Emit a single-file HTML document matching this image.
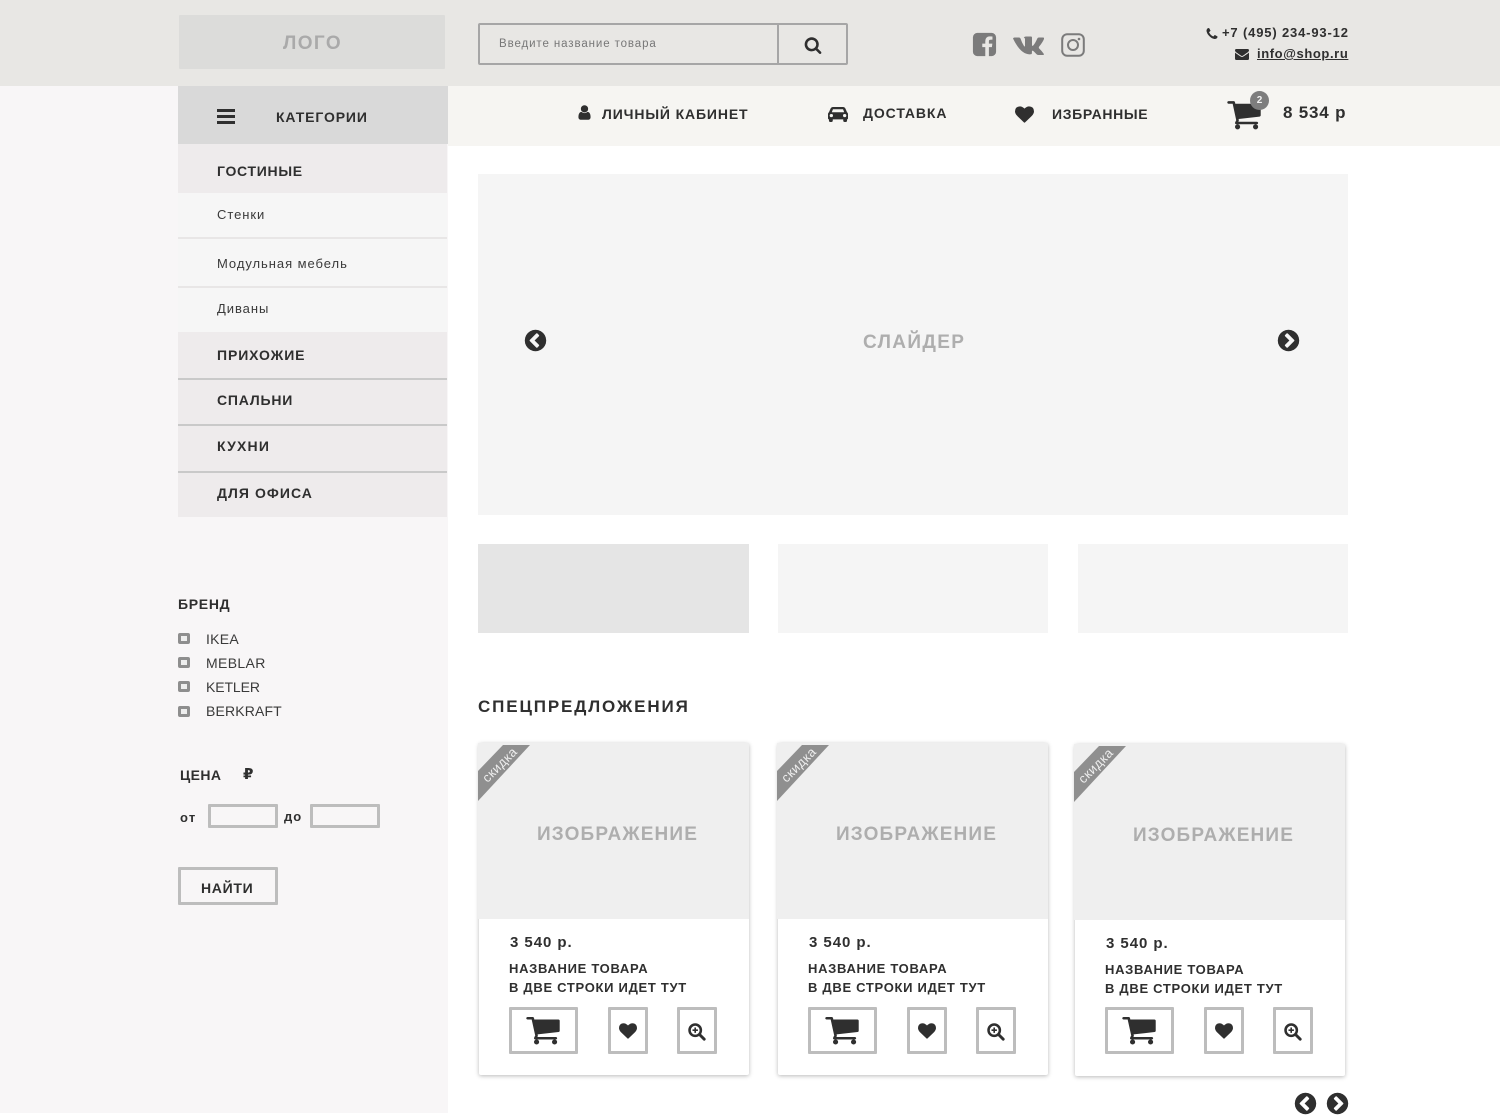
<!DOCTYPE html>
<html lang="ru"><head><meta charset="utf-8"><title>Магазин</title>
<style>
html,body{margin:0;padding:0}
body{position:relative;width:1500px;height:1113px;overflow:hidden;background:#fff;font-family:"Liberation Sans",sans-serif;color:#2f2f2f}
.b,.t,svg{position:absolute}
.t{white-space:nowrap;line-height:20px}
.h{font-weight:700;font-size:14px;letter-spacing:.87px}
.s{font-size:13px;letter-spacing:.95px;color:#3a3a3a}
.g{font-weight:700;color:#aeaeae}
.f{font-size:14px;color:#3a3a3a}
.c{fill:#2f2f2f}
.cb{width:6px;height:5px;left:178px;border:3px solid #8e8e8e;background:#eee;border-radius:2px}
.btn{border:3px solid #bdbdbd;box-sizing:border-box;border-radius:1px;background:#fff}
.card{width:271px;height:332px}
.body{position:absolute;left:1px;top:0;width:270px;height:332px;background:#fff;box-shadow:0 1px 4px rgba(0,0,0,.28);border-radius:2px}
.img{position:absolute;left:0;top:0;width:271px;height:176px;background:#efefef}
.rib{position:absolute;left:0;top:0;width:60px;height:60px;background:#8f8f8f;clip-path:polygon(0 28px,25px 2px,52px 2px,0 58px)}
.rt{position:absolute;left:-4px;top:12px;width:52px;height:20px;transform:rotate(-45deg);color:#eee;font-size:13px;line-height:20px;text-align:center;letter-spacing:.5px;white-space:nowrap}
.nm{font-size:13px;font-weight:700;letter-spacing:.7px}
</style></head><body>
<svg width="0" height="0" style="position:absolute"><defs>
<path id="cart" d="M704 1536q0 52-38 90t-90 38-90-38-38-90 38-90 90-38 90 38 38 90zm896 0q0 52-38 90t-90 38-90-38-38-90 38-90 90-38 90 38 38 90zm128-1088v512q0 24-16.500 42.500t-40.500 21.500l-1044 122q13 60 13 70 0 16-24 64h920q26 0 45 19t19 45-19 45-45 19h-1024q-26 0-45-19t-19-45q0-11 8-31.500t16-36 21.500-40 15.500-29.500l-177-823h-204q-26 0-45-19t-19-45 19-45 45-19h256q16 0 28.500 6.500t19.500 15.500 13 24.500 8 26 5.500 29.500 4.500 26h1201q26 0 45 19t19 45z"/>
<path id="heart" d="M896 1664q-26 0-44-18l-624-602q-10-8-27.500-26t-55.500-65.500-68-97.500-53.500-121-23.500-138q0-220 127-344t351-124q62 0 126.500 21.500t120 58 95.500 68.500 76 68q36-36 76-68t95.500-68.500 120-58 126.500-21.500q224 0 351 124t127 344q0 221-229 450l-623 600q-18 18-44 18z"/>
<path id="left" d="M1037 1395l102-102q19-19 19-45t-19-45l-307-307 307-307q19-19 19-45t-19-45l-102-102q-19-19-45-19t-45 19l-454 454q-19 19-19 45t19 45l454 454q19 19 45 19t45-19zm627-499q0 209-103 385.500t-279.500 279.500-385.500 103-385.500-103-279.500-279.500-103-385.500 103-385.500 279.500-279.500 385.500-103 385.500 103 279.500 279.500 103 385.500z"/>
<path id="right" d="M845 1395l454-454q19-19 19-45t-19-45l-454-454q-19-19-45-19t-45 19l-102 102q-19 19-19 45t19 45l307 307-307 307q-19 19-19 45t19 45l102 102q19 19 45 19t45-19zm819-499q0 209-103 385.500t-279.500 279.500-385.500 103-385.500-103-279.500-279.500-103-385.500 103-385.500 279.500-279.500 385.500-103 385.500 103 279.500 279.500 103 385.500z"/>
<g id="zoom"><circle cx="8" cy="8" r="6.300" fill="none" stroke="#2f2f2f" stroke-width="2.800"/><path d="M12.800 12.800L18 18" stroke="#2f2f2f" stroke-width="3.200" stroke-linecap="round"/><path d="M8 5v6M5 8h6" stroke="#2f2f2f" stroke-width="1.800"/></g>
</defs></svg>

<div class="b" style="left:0;top:0;width:1500px;height:86px;background:#e8e7e4"></div>
<div class="b" style="left:448px;top:86px;width:1052px;height:60px;background:#f6f5f2"></div>
<div class="b" style="left:0;top:86px;width:448px;height:1027px;background:#f8f6f7"></div>

<div class="b" style="left:179px;top:15px;width:266px;height:54px;background:#dcdcda;border-radius:1px"></div>
<div class="t g" style="left:283px;top:34px;font-size:19px;letter-spacing:1.400px;font-weight:700;color:#aaa">ЛОГО</div>
<div class="b" style="left:478px;top:23px;width:370px;height:42px;box-sizing:border-box;border:2px solid #a6a6a6;border-radius:2px"></div>
<div class="b" style="left:777px;top:24px;width:2px;height:40px;background:#a6a6a6"></div>
<div class="t" style="left:499px;top:34px;font-size:11.500px;letter-spacing:.9px;color:#777">Введите название товара</div>
<svg style="left:804px;top:36px" width="18" height="18" viewBox="0 0 1792 1792"><path class="c" d="M1216 832q0-185-131.500-316.500t-316.500-131.500-316.500 131.500-131.500 316.500 131.500 316.500 316.500 131.500 316.500-131.500 131.500-316.500zm512 832q0 52-38 90t-90 38q-54 0-90-38l-343-342q-179 124-399 124-143 0-273.500-55.500t-225-150-150-225-55.500-273.500 55.500-273.500 150-225 225-150 273.500-55.500 273.500 55.500 225 150 150 225 55.500 273.500q0 220-124 399l343 343q37 37 37 90z"/></svg>

<svg style="left:971px;top:31px" width="27" height="27" viewBox="0 0 1792 1792"><path fill="#7b7b7b" d="M1376 128q119 0 203.500 84.500t84.500 203.500v960q0 119-84.500 203.500t-203.500 84.500h-188v-595h199l30-232h-229v-148q0-56 23.500-84t91.500-28l122-1v-207q-63-9-178-9-136 0-217.500 80t-81.500 226v171h-200v232h200v595h-532q-119 0-203.500-84.500t-84.500-203.500v-960q0-119 84.500-203.500t203.500-84.500h960z"/></svg>
<svg style="left:1013px;top:35px" width="31" height="20" viewBox="0 0 31 20"><path fill="#7b7b7b" d="M0 3.500Q.5 2.500 1.500 2.500H6q1 0 1.500 1Q9 8 11 11q.8 1 1 0V4Q12 3 10.800 2.500 11.500 1.500 13 1.500h5q1.200 0 1 1.500v7q0 1.300 1 .7 2-2 4.300-7.200.5-1 1.500-1h4.200q1.500 0 1 1.500-1.500 3.500-4.800 7.500-.8 1 0 2 2.800 2.700 4.500 5.200.7 1.300-.8 1.300h-4.600q-1.200 0-2-1-1.400-1.600-3-3-1.300-1-1.400.6V18q0 1.300-1.500 1.300Q8 20 0 3.500z"/></svg>
<svg style="left:1061px;top:33px" width="24" height="24" viewBox="0 0 24 24" fill="none" stroke="#7b7b7b"><rect x="1.200" y="1.200" width="21.600" height="21.600" rx="5" stroke-width="2"/><circle cx="12" cy="12" r="5" stroke-width="2"/><circle cx="18" cy="6" r="1.300" fill="#7b7b7b" stroke="none"/></svg>

<svg style="left:1205px;top:27px" width="14" height="14" viewBox="0 0 1792 1792"><path class="c" d="M1600 1240q0 27-10 70.500t-21 68.500q-21 50-122 106-94 51-186 51-27 0-53-3.500t-57.500-12.500-47-14.500-55.500-20.500-49-18q-98-35-175-83-127-79-264-216t-216-264q-48-77-83-175-3-9-18-49t-20.500-55.500-14.500-47-12.500-57.500-3.500-53q0-92 51-186 56-101 106-122 25-11 68.500-21t70.500-10q14 0 21 3 18 6 53 76 11 19 30 54t35 63.500 31 53.500q3 4 17.500 25t21.500 35.500 7 28.500q0 20-28.500 50t-62 55-62 53-28.500 46q0 9 5 22.500t8.500 20.500 14 24 11.500 19q76 137 174 235t235 174q2 1 19 11.500t24 14 20.500 8.500 22.500 5q18 0 46-28.500t53-62 55-62 50-28.500q14 0 28.500 7t35.500 21.500 25 17.500q25 15 53.500 31t63.500 35 54 30q70 35 76 53 3 7 3 21z"/></svg>
<div class="t" style="left:1222px;top:23px;font-size:13px;font-weight:700;letter-spacing:.84px">+7 (495) 234-93-12</div>
<svg style="left:1235px;top:47px" width="14" height="14" viewBox="0 0 1792 1792"><path class="c" d="M1792 710v794q0 66-47 113t-113 47h-1472q-66 0-113-47t-47-113v-794q44 49 101 87 362 246 497 345 57 42 92.500 65.500t94.500 48 110 24.500h2q51 0 110-24.500t94.500-48 92.500-65.500q170-123 498-345 57-39 100-87zm0-294q0 79-49 151t-122 123q-376 261-468 325-10 7-42.500 30.500t-54 38-52 32.500-57.500 27-50 9h-2q-23 0-50-9t-57.500-27-52-32.500-54-38-42.500-30.500q-91-64-262-182.500t-205-142.500q-62-42-117-115.500t-55-136.500q0-78 41.500-130t118.500-52h1472q65 0 112.500 47t47.500 113z"/></svg>
<div class="t" style="left:1257px;top:44px;font-size:13px;font-weight:700;letter-spacing:.6px;text-decoration:underline">info@shop.ru</div>

<div class="b" style="left:178px;top:86px;width:270px;height:58px;background:#d9d9d9"></div>
<div class="b" style="left:217px;top:109px;width:18px;height:3px;background:#2f2f2f"></div>
<div class="b" style="left:217px;top:115px;width:18px;height:3px;background:#2f2f2f"></div>
<div class="b" style="left:217px;top:121px;width:18px;height:3px;background:#2f2f2f"></div>
<div class="t h" style="left:276px;top:107px">КАТЕГОРИИ</div>

<svg style="left:576px;top:104px" width="17" height="17" viewBox="0 0 1792 1792"><path class="c" d="M1536 1399q0 109-62.500 187t-150.500 78h-854q-88 0-150.500-78t-62.500-187q0-85 8.500-160.500t31.500-152 58.500-131 94-89 134.500-34.500q131 128 313 128t313-128q76 0 134.500 34.500t94 89 58.500 131 31.500 152 8.500 160.500zm-256-887q0 159-112.500 271.500t-271.500 112.500-271.500-112.500-112.500-271.500 112.500-271.500 271.500-112.500 271.500 112.500 112.500 271.500z"/></svg>
<div class="t h" style="left:602px;top:104px">ЛИЧНЫЙ КАБИНЕТ</div>
<svg style="left:828px;top:107px" width="20" height="15" viewBox="0 0 21 17" preserveAspectRatio="none"><path class="c" d="M5 0h11q1.500 0 2.200 1.500L20 6q1 .8 1 2v5q0 1-1 1v1.500q0 1.500-1.500 1.500h-1q-1.500 0-1.500-1.500V14H5v1.500Q5 17 3.500 17h-1Q1 17 1 15.500V14q-1 0-1-1V8q0-1.200 1-2l1.800-4.500Q3.500 0 5 0zm.2 2.500L4 6h13l-1.200-3.500zM3.500 8a1.600 1.600 0 100 3.500 1.600 1.600 0 000-3.500zm14 0a1.600 1.600 0 100 3.500 1.600 1.600 0 000-3.500z"/></svg>
<div class="t h" style="left:863px;top:103px;letter-spacing:.9px">ДОСТАВКА</div>
<svg style="left:1015px;top:105px" width="19" height="19" viewBox="0 0 1792 1792"><use href="#heart" class="c"/></svg>
<div class="t h" style="left:1052px;top:104px;letter-spacing:.65px">ИЗБРАННЫЕ</div>
<svg style="left:1226px;top:96px" width="36" height="36" viewBox="0 0 1792 1792"><use href="#cart" class="c"/></svg>
<div class="b" style="left:1250px;top:91px;width:19px;height:19px;border-radius:50%;background:#7d7d7d;color:#f2f2f2;font-size:10px;font-weight:700;line-height:19px;text-align:center">2</div>
<div class="t" style="left:1283px;top:103px;font-size:17px;font-weight:700;letter-spacing:.8px">8 534 р</div>

<div class="b" style="left:178px;top:144px;width:269px;height:49px;background:#eeebec"></div>
<div class="t h" style="left:217px;top:161px;letter-spacing:.7px">ГОСТИНЫЕ</div>
<div class="b" style="left:178px;top:193px;width:269px;height:139px;background:#f6f6f6"></div>
<div class="b" style="left:178px;top:237px;width:269px;height:2px;background:#e8e6e6"></div>
<div class="b" style="left:178px;top:286px;width:269px;height:2px;background:#e8e6e6"></div>
<div class="t s" style="left:217px;top:205px">Стенки</div>
<div class="t s" style="left:217px;top:254px">Модульная мебель</div>
<div class="t s" style="left:217px;top:299px">Диваны</div>
<div class="b" style="left:178px;top:332px;width:269px;height:185px;background:#eeebec"></div>
<div class="b" style="left:178px;top:378px;width:269px;height:2px;background:#c9c9c9"></div>
<div class="b" style="left:178px;top:424px;width:269px;height:2px;background:#c9c9c9"></div>
<div class="b" style="left:178px;top:471px;width:269px;height:2px;background:#c9c9c9"></div>
<div class="t h" style="left:217px;top:345px;letter-spacing:.9px">ПРИХОЖИЕ</div>
<div class="t h" style="left:217px;top:390px;letter-spacing:.8px">СПАЛЬНИ</div>
<div class="t h" style="left:217px;top:436px;letter-spacing:1.200px">КУХНИ</div>
<div class="t h" style="left:217px;top:483px;letter-spacing:1.050px">ДЛЯ ОФИСА</div>

<div class="t h" style="left:178px;top:594px;letter-spacing:.7px">БРЕНД</div>
<div class="b cb" style="top:633px"></div><div class="t f" style="left:206px;top:629px;letter-spacing:.25px">IKEA</div>
<div class="b cb" style="top:657px"></div><div class="t f" style="left:206px;top:653px;letter-spacing:.35px">MEBLAR</div>
<div class="b cb" style="top:681px"></div><div class="t f" style="left:206px;top:677px;letter-spacing:-.1px">KETLER</div>
<div class="b cb" style="top:706px"></div><div class="t f" style="left:206px;top:701px;letter-spacing:.15px">BERKRAFT</div>
<div class="t h" style="left:180px;top:765px;letter-spacing:.4px">ЦЕНА</div>
<div class="t" style="left:243px;top:764px;font-size:15px;font-weight:700;font-family:'DejaVu Sans',sans-serif">₽</div>
<div class="t" style="left:180px;top:808px;font-size:13px;font-weight:700;letter-spacing:1.200px">от</div>
<div class="b btn" style="left:208px;top:804px;width:70px;height:24px;background:#f8f6f7"></div>
<div class="t" style="left:284px;top:807px;font-size:13px;font-weight:700;letter-spacing:1px">до</div>
<div class="b btn" style="left:310px;top:804px;width:70px;height:24px;background:#f8f6f7"></div>
<div class="b btn" style="left:178px;top:867px;width:100px;height:38px;background:#f8f6f7"></div>
<div class="t h" style="left:201px;top:878px;letter-spacing:.7px">НАЙТИ</div>

<div class="b" style="left:478px;top:174px;width:870px;height:341px;background:#f5f5f5"></div>
<div class="t g" style="left:863px;top:333px;font-size:19px;letter-spacing:1.350px">СЛАЙДЕР</div>
<svg style="left:523px;top:328px" width="25" height="25" viewBox="0 0 1792 1792"><use href="#left" class="c"/></svg>
<svg style="left:1276px;top:328px" width="25" height="25" viewBox="0 0 1792 1792"><use href="#right" class="c"/></svg>
<div class="b" style="left:478px;top:544px;width:271px;height:89px;background:#e5e5e5"></div>
<div class="b" style="left:778px;top:544px;width:270px;height:89px;background:#f5f5f5"></div>
<div class="b" style="left:1078px;top:544px;width:270px;height:89px;background:#f5f5f5"></div>
<div class="t" style="left:478px;top:697px;font-size:17px;font-weight:700;letter-spacing:1.870px">СПЕЦПРЕДЛОЖЕНИЯ</div>

<!-- card 1 -->
<div class="b card" style="left:478px;top:743px"><div class="body"></div><div class="img"></div><div class="rib"></div><div class="rt">скидка</div>
<div class="t g" style="left:59px;top:82px;font-size:19px;letter-spacing:1.150px">ИЗОБРАЖЕНИЕ</div>
<div class="t" style="left:32px;top:190px;font-size:15px;font-weight:700;letter-spacing:.95px">3 540 р.</div>
<div class="t nm" style="left:31px;top:216px">НАЗВАНИЕ ТОВАРА</div>
<div class="t nm" style="left:31px;top:235px">В ДВЕ СТРОКИ ИДЕТ ТУТ</div>
<div class="b btn" style="left:31px;top:264px;width:69px;height:47px"></div>
<svg style="left:47px;top:269px" width="36" height="35" viewBox="0 0 1792 1792" preserveAspectRatio="none"><use href="#cart" class="c"/></svg>
<div class="b btn" style="left:130px;top:264px;width:40px;height:47px"></div>
<svg style="left:141px;top:279px" width="18" height="18" viewBox="0 0 1792 1792"><use href="#heart" class="c"/></svg>
<div class="b btn" style="left:199px;top:264px;width:40px;height:47px"></div>
<svg style="left:210px;top:280px" width="18" height="18" viewBox="0 0 20 20"><use href="#zoom"/></svg>
</div>
<!-- card 2 -->
<div class="b card" style="left:777px;top:743px"><div class="body"></div><div class="img"></div><div class="rib"></div><div class="rt">скидка</div>
<div class="t g" style="left:59px;top:82px;font-size:19px;letter-spacing:1.150px">ИЗОБРАЖЕНИЕ</div>
<div class="t" style="left:32px;top:190px;font-size:15px;font-weight:700;letter-spacing:.95px">3 540 р.</div>
<div class="t nm" style="left:31px;top:216px">НАЗВАНИЕ ТОВАРА</div>
<div class="t nm" style="left:31px;top:235px">В ДВЕ СТРОКИ ИДЕТ ТУТ</div>
<div class="b btn" style="left:31px;top:264px;width:69px;height:47px"></div>
<svg style="left:47px;top:269px" width="36" height="35" viewBox="0 0 1792 1792" preserveAspectRatio="none"><use href="#cart" class="c"/></svg>
<div class="b btn" style="left:130px;top:264px;width:40px;height:47px"></div>
<svg style="left:141px;top:279px" width="18" height="18" viewBox="0 0 1792 1792"><use href="#heart" class="c"/></svg>
<div class="b btn" style="left:199px;top:264px;width:40px;height:47px"></div>
<svg style="left:210px;top:280px" width="18" height="18" viewBox="0 0 20 20"><use href="#zoom"/></svg>
</div>
<!-- card 3 -->
<div class="b card" style="left:1074px;top:744px"><div class="body"></div><div class="img"></div><div class="rib"></div><div class="rt">скидка</div>
<div class="t g" style="left:59px;top:82px;font-size:19px;letter-spacing:1.150px">ИЗОБРАЖЕНИЕ</div>
<div class="t" style="left:32px;top:190px;font-size:15px;font-weight:700;letter-spacing:.95px">3 540 р.</div>
<div class="t nm" style="left:31px;top:216px">НАЗВАНИЕ ТОВАРА</div>
<div class="t nm" style="left:31px;top:235px">В ДВЕ СТРОКИ ИДЕТ ТУТ</div>
<div class="b btn" style="left:31px;top:263px;width:69px;height:47px"></div>
<svg style="left:47px;top:268px" width="36" height="35" viewBox="0 0 1792 1792" preserveAspectRatio="none"><use href="#cart" class="c"/></svg>
<div class="b btn" style="left:130px;top:263px;width:40px;height:47px"></div>
<svg style="left:141px;top:278px" width="18" height="18" viewBox="0 0 1792 1792"><use href="#heart" class="c"/></svg>
<div class="b btn" style="left:199px;top:263px;width:40px;height:47px"></div>
<svg style="left:210px;top:279px" width="18" height="18" viewBox="0 0 20 20"><use href="#zoom"/></svg>
</div>

<svg style="left:1293px;top:1091px" width="25" height="25" viewBox="0 0 1792 1792"><use href="#left" class="c"/></svg>
<svg style="left:1325px;top:1091px" width="25" height="25" viewBox="0 0 1792 1792"><use href="#right" class="c"/></svg>
</body></html>
